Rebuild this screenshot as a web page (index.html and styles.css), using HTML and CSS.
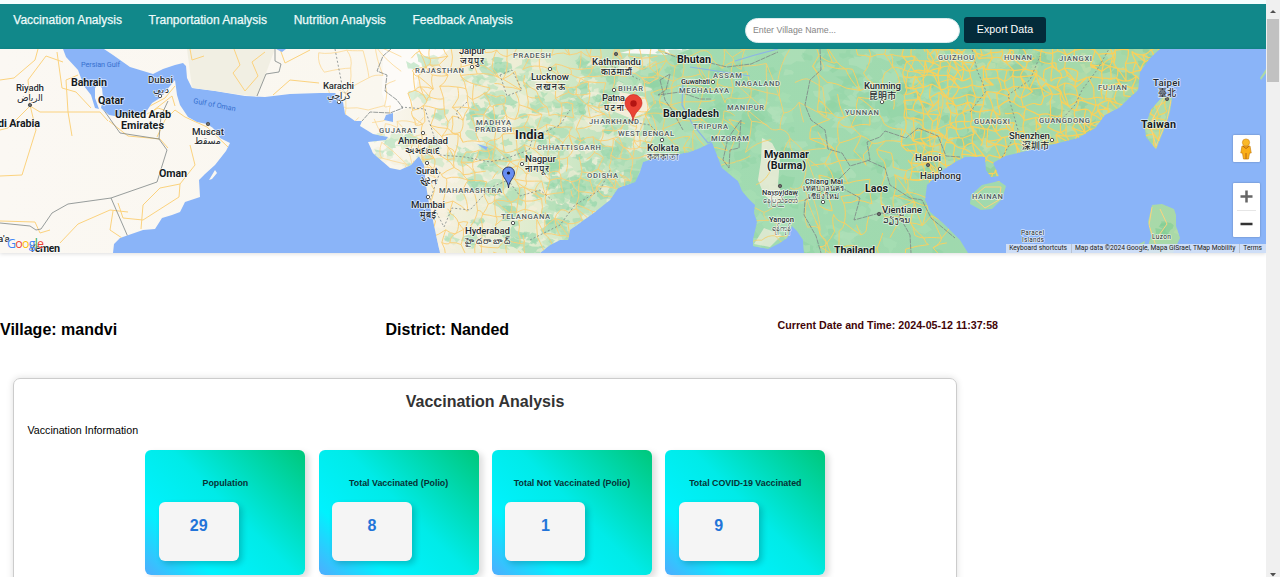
FILE: index.html
```html
<!DOCTYPE html>
<html lang="en">
<head>
<meta charset="utf-8">
<title>Vaccination Analysis</title>
<link rel="stylesheet" href="styles.css">
</head>
<body>
<div class="page">
<header class="topbar">
  <nav class="nav"><a>Vaccination Analysis</a><a>Tranportation Analysis</a><a>Nutrition Analysis</a><a>Feedback Analysis</a></nav>
  <div class="tools"><input class="search" placeholder="Enter Village Name..."><button class="export">Export Data</button></div>
</header>
<section class="map">
<svg class="map-canvas" viewBox="0 49 1266 204" preserveAspectRatio="none">
  <defs>
    <linearGradient id="terrain" gradientUnits="userSpaceOnUse" x1="0" y1="0" x2="1266" y2="0">
      <stop offset="0" stop-color="#fbf8f3"/><stop offset=".3" stop-color="#faf7ef"/><stop offset=".35" stop-color="#f4f0df"/><stop offset=".42" stop-color="#dfecce"/><stop offset=".5" stop-color="#b7e0ba"/><stop offset=".56" stop-color="#a1dbb1"/><stop offset=".75" stop-color="#9fd9ae"/><stop offset="1" stop-color="#add9a6"/>
    </linearGradient>
    <path id="land" d="M0 49H63L66 57L78 70L84 86L91 95L95 108L99 109L95 98L95 88L98 84L102 88L103 98L101 108L109 115L120 117L135 115L146 112L152 103L160 98L170 86L175 80L177 95L180 105L188 117L197 122L207 124L213 128L220 138L230 143L226 151L215 165L205 174L199 180L200 197L185 202L180 212L172 215L162 218L155 229L143 230L120 238L114 244L113 253H0Z
      M104 49L113 55L130 67L153 74L163 69L175 65L183 63L186 66L187 78L192 88L215 91L245 96L265 97L290 94L320 93L335 93L343 102L345 114L355 121L362 121L360 126L373 134L388 137L386 140L368 142L373 153L382 161L390 168L400 170L411 165L419 156L424 165L426 185L428 198L432 215L436 235L440 253H540L550 245L560 240L568 240L570 230L595 212L610 200L618 188L635 182L640 172L643 162L655 158L672 155L690 152L700 148L712 142L718 158L722 168L738 181L742 191L748 198L755 205L754 213L757 222L753 240L753 246L768 249L780 243L787 238L792 226L797 231L803 240L804 253H968L960 240L945 225L930 212L925 200L927 185L940 172L955 162L965 157L985 157L986 170L991 177L999 176L993 163L1005 156L1030 150L1050 145L1078 138L1095 128L1105 115L1120 107L1129 98L1138 90L1140 72L1150 58L1160 49Z
      M1163 96L1172 98L1170 112L1164 130L1156 149L1146 137L1145 126L1151 110Z
      M971 195L982 185L999 181L1006 186L1002 199L992 209L981 210L970 204Z
      M1152 205L1162 204L1174 209L1176 215L1176 226L1180 238L1173 253H1146L1151 236L1148 222Z
      M1260 78L1266 69V73L1261 80Z M209 180L215 170L217 173L212 179Z M1139 244L1145 241L1142 253Z"/>
    <clipPath id="land-clip"><use href="#land"/></clipPath>
  </defs>
  <rect y="49" width="1266" height="204" fill="#8ab4f8"/>
  <use href="#land" fill="url(#terrain)"/>
  <g clip-path="url(#land-clip)">
    <path d="M187 49H275L257 97L192 88Z" fill="#f1efe3"/>
    <path d="M383 49H450L420 70L412 106L390 115L382 94Z" fill="#fdfbf8"/>
    <path d="M635 49H690L675 55L620 53Z" fill="#f8f8f4"/>
    <g id="patches"></g>
    <path d="M762 138L772 143L780 158L778 185L783 196L777 205L764 195L758 180L761 160Z" fill="#f5eedc" opacity=".75"/>
    <path d="M620 92L645 97L650 110L632 119L615 112Z" fill="#f4eeda"/>
    <path d="M764 228L782 235L770 247L754 244Z" fill="#f2eedb" opacity=".7"/>
    <g id="roads" fill="none" stroke-linejoin="round"></g>
    <g fill="none" stroke="#fbd27e" stroke-width="1" stroke-linejoin="round">
      <path d="M0 80L14 78L35 60L38 49M30 106L40 112H100L108 121M30 106L8 128L0 130M30 103L28 80L46 56L63 62M30 105L36 130L22 175L0 176M57 52L62 88L76 92L91 108M68 112L66 80L78 75M68 112L72 136M109 121L128 136L160 139L168 148M157 137L165 120L175 110M190 145L195 165L180 184L160 188L143 205L141 229M180 184L179 197L143 220L123 218L118 203M0 221L35 222L40 233L50 230M60 243L78 224L110 210L128 212M113 211L110 230L122 238M175 110L185 117L207 127L228 147M150 106L165 98L175 86M154 110L163 103L172 96L175 106M147 114L158 108L170 112M234 49L240 65L233 73L245 91L258 76L252 62L265 52M273 95L290 80L319 83M280 49L285 63L310 50M190 49L192 60L204 56"/>
      <path d="M1164 98L1150 124L1156 146L1167 120L1171 100M973 197L985 187L1001 187L999 200L985 208L973 197M1152 207L1149 225L1156 246M1160 209L1167 224L1157 238"/>
    </g>
    <g fill="none" stroke="#7d8585" stroke-width=".8">
      <path d="M103 109L120 133L159 139L167 150L157 182L111 198L68 204L52 213L41 229L36 230L30 226L0 223M111 198L128 237M159 139L161 116L168 101M275 49V61L281 64L279 72L266 74L257 96"/>
      <path d="M391 49L383 56L377 71L387 75L385 91L397 100L403 108L390 113L370 112L362 121M665 53L682 59L706 62L727 67L751 64L778 52M820 49L821 70L810 80L805 105L811 120L825 130L828 149L842 153L850 166L870 160L867 142L880 137L885 131L906 138L918 128L938 136L946 156L960 157M660 80L670 74L666 90L658 95L680 92L700 99L712 99M660 80L665 100L672 110L683 130M741 120L739 148L730 150L729 168L723 160L728 138L741 120M850 168L832 186L805 200L804 215L816 236L821 253M867 160L885 168L890 185L910 198L922 200L931 218L955 238M842 188L860 198L854 220L880 213L898 214L910 235L911 253" stroke-dasharray="5 .8"/>
      <path stroke-dasharray="2 2" d="M335 49L343 90L347 95M401 107L425 109L432 130L440 155L465 157L490 162L510 157L529 150L533 137L560 125L570 110M500 75L512 70L522 90L507 96L500 75M467 102L456 112L459 119M440 172L430 200L444 227L452 208L470 210L490 188L508 180L520 196L540 190L552 200M530 240L560 225L575 205L600 190L610 170M970 112L986 91L977 70L972 49M1000 161L1018 130L1008 95L1030 80L1040 56M1063 118L1075 105L1082 90L1097 70L1109 49M600 60L620 70L640 80M620 120L650 125L665 140"/>
    </g>
    <path d="M683 83L682 105L693 125L708 143L715 140M735 61L755 55L778 49M750 76L690 67" fill="none" stroke="#8db5e6" stroke-width="1.2"/>
    <path d="M386 115L393 113V122L384 120ZM477 144L488 147L486 150ZM276 49H286L282 52Z" fill="#8ab4f8"/>
  </g>
  <g class="dots"><circle cx="30" cy="105" r="1.700"/><circle cx="160" cy="96" r="1.700"/><circle cx="208" cy="124" r="1.700"/><circle cx="339" cy="102" r="1.700"/><circle cx="472" cy="67" r="1.700"/><circle cx="550" cy="69" r="1.700"/><circle cx="616" cy="54" r="1.700"/><circle cx="614" cy="90" r="1.700"/><circle cx="423" cy="133" r="1.700"/><circle cx="427" cy="163" r="1.700"/><circle cx="428" cy="197" r="1.700"/><circle cx="522" cy="164" r="1.700"/><circle cx="513" cy="223" r="1.700"/><circle cx="662" cy="140" r="1.700"/><circle cx="713" cy="82" r="1.700"/><circle cx="780" cy="186" r="1.700"/><circle cx="882" cy="102" r="1.700"/><circle cx="823" cy="202" r="1.700"/><circle cx="879" cy="214" r="1.700"/><circle cx="928" cy="165" r="1.700"/><circle cx="940" cy="169" r="1.700"/><circle cx="1052" cy="140" r="1.700"/><circle cx="1167" cy="99" r="1.700"/></g>
  <g class="capitals"><circle cx="30" cy="105" r=".9"/><circle cx="208" cy="124" r=".9"/><circle cx="616" cy="54" r=".9"/><circle cx="780" cy="186" r=".9"/><circle cx="879" cy="214" r=".9"/><circle cx="928" cy="165" r=".9"/><circle cx="1167" cy="99" r=".9"/></g>
  <g class="country">
    <text x="71" y="86" textLength="36">Bahrain</text><text x="98" y="104" textLength="26">Qatar</text><text x="115" y="118" textLength="56">United Arab</text><text x="121" y="129" textLength="43">Emirates</text><text x="-2" y="126.500" textLength="42">di Arabia</text><text x="159" y="177" textLength="28">Oman</text><text x="29" y="252" textLength="31">Yemen</text>
    <text class="major" x="515" y="139" textLength="29">India</text><text x="677" y="63" textLength="34">Bhutan</text><text x="663" y="117" textLength="56">Bangladesh</text><text x="764" y="158" textLength="45">Myanmar</text><text x="767" y="168.500" textLength="39">(Burma)</text><text x="865" y="192" textLength="23">Laos</text><text x="834" y="254" textLength="41">Thailand</text><text x="1141" y="128" textLength="35">Taiwan</text>
  </g>
  <g class="city">
    <text x="16" y="91" textLength="28">Riyadh</text><text x="17" y="101" textLength="26">الرياض</text><text x="148" y="83" textLength="25">Dubai</text><text x="153" y="93" textLength="16">دبي</text><text x="192" y="135" textLength="32">Muscat</text><text x="194" y="144" textLength="27">مسقط</text><text x="-2" y="242">a'a</text>
    <text x="323" y="89" textLength="31">Karachi</text><text x="327" y="99" textLength="24">كراچي</text><text x="459" y="54" textLength="26">Jaipur</text><text class="native" x="460" y="63.500" textLength="24">जयपुर</text><text x="531" y="80" textLength="38">Lucknow</text><text class="native" x="536" y="89.500" textLength="29">लखनऊ</text><text x="592" y="65" textLength="49">Kathmandu</text><text class="native" x="601" y="74.500" textLength="31">काठमाडौं</text><text x="602" y="101" textLength="23">Patna</text><text class="native" x="604" y="110.500" textLength="20">पटना</text>
    <text x="398" y="144" textLength="50">Ahmedabad</text><text class="native" x="405" y="153.500" textLength="35">અમદાવાદ</text><text x="416" y="174" textLength="22">Surat</text><text class="native" x="419" y="184" textLength="17">સુરત</text><text x="411" y="208" textLength="34">Mumbai</text><text class="native" x="420" y="217.500" textLength="16">मुंबई</text><text x="525" y="162" textLength="31">Nagpur</text><text class="native" x="525" y="171.500" textLength="24">नागपूर</text><text x="465" y="234" textLength="45">Hyderabad</text><text class="native" x="465" y="244" textLength="45">హైదరాబాద్</text>
    <text x="647" y="151" textLength="32">Kolkata</text><text class="native" x="647" y="160" textLength="32">কলকাতা</text><text class="small" x="681" y="84" textLength="29">Guwahati</text><text x="864" y="89" textLength="37">Kunming</text><text class="native" x="869" y="98.500" textLength="27">昆明市</text><text class="small" x="762" y="195" textLength="36">Naypyidaw</text><text class="small" x="763" y="203" textLength="35">နေပြည်တော်</text><text class="small" x="769" y="222" textLength="25">Yangon</text><text class="small" x="772" y="231" textLength="19">ရန်ကုန်</text><text class="small" x="805" y="184" textLength="38">Chiang Mai</text><text class="small" x="803" y="191" textLength="41">เทศบาลนคร</text><text class="small" x="808" y="199" textLength="31">เชียงใหม่</text>
    <text x="882" y="213" textLength="40">Vientiane</text><text class="native" x="883" y="222.500" textLength="27">ວຽງຈັນ</text><text x="915" y="161" textLength="26">Hanoi</text><text x="920" y="179" textLength="41">Haiphong</text><text x="1009" y="139" textLength="41">Shenzhen</text><text class="native" x="1022" y="149" textLength="27">深圳市</text><text x="1153" y="86" textLength="27">Taipei</text><text class="native" x="1158" y="95.500" textLength="18">臺北</text><text class="islet" x="1152" y="239" textLength="19">Luzon</text><text class="islet" x="1021" y="235" textLength="23">Paracel</text><text class="islet" x="1022" y="241.500" textLength="22">Islands</text>
  </g>
  <g class="state">
    <text x="415" y="72.500" textLength="49">RAJASTHAN</text><text x="513" y="57.500" textLength="38">PRADESH</text><text x="618" y="90.500" textLength="25">BIHAR</text><text x="589" y="124" textLength="50">JHARKHAND</text><text x="618" y="135.500" textLength="56">WEST BENGAL</text><text x="379" y="133" textLength="38">GUJARAT</text><text x="476" y="124.500" textLength="35">MADHYA</text><text x="475" y="131.500" textLength="37">PRADESH</text><text x="537" y="149.500" textLength="64">CHHATTISGARH</text><text x="587" y="177.500" textLength="31">ODISHA</text><text x="439" y="192.500" textLength="63">MAHARASHTRA</text><text x="501" y="219" textLength="49">TELANGANA</text><text x="713" y="77.500" textLength="29">ASSAM</text><text x="735" y="86" textLength="45">NAGALAND</text><text x="679" y="92.500" textLength="50">MEGHALAYA</text><text x="727" y="109.500" textLength="37">MANIPUR</text><text x="693" y="128.500" textLength="35">TRIPURA</text><text x="711" y="141" textLength="38">MIZORAM</text><text x="845" y="114.500" textLength="34">YUNNAN</text><text x="938" y="60" textLength="36">GUIZHOU</text><text x="1004" y="60" textLength="28">HUNAN</text><text x="1059" y="61" textLength="33">JIANGXI</text><text x="1098" y="90" textLength="29">FUJIAN</text><text x="974" y="123.500" textLength="36">GUANGXI</text><text x="1039" y="122.500" textLength="51">GUANGDONG</text><text x="972" y="198.500" textLength="31">HAINAN</text>
  </g>
  <g class="water"><text x="81" y="67" textLength="39">Persian Gulf</text><text x="193" y="103" transform="rotate(11 193 103)" textLength="43">Gulf of Oman</text></g>
  <path d="M633 121C632 111 625 110 625 103A8.500 8.500 0 0 1 642 103C642 110 634 111 633 121Z" fill="#ea4335" stroke="#c5221f" stroke-width=".6"/><circle cx="633.500" cy="103.500" r="3.200" fill="#b31412"/>
  <path d="M508.500 188C508 180 502.500 178 502.500 173A6 6 0 0 1 514.500 173C514.500 178 509 180 508.500 188Z" fill="#668df1" stroke="#222d55" stroke-width=".9"/><circle cx="508.500" cy="173" r="1.600" fill="#10152d"/>
  <text class="google" x="7" y="248" textLength="37"><tspan fill="#4285f4">G</tspan><tspan fill="#ea4335">o</tspan><tspan fill="#fbbc04">o</tspan><tspan fill="#4285f4">g</tspan><tspan fill="#34a853">l</tspan><tspan fill="#ea4335">e</tspan></text>
</svg>
<div class="controls">
  <div class="control person"><svg width="16" height="22" viewBox="0 0 16 22"><path d="M4 8H12L13.200 15H11.500L10.500 21H5.500L4.500 15H2.800Z" fill="#fbaf18" stroke="#c98213" stroke-width=".7"/><circle cx="8" cy="4.500" r="3.600" fill="#fbb928" stroke="#c98213" stroke-width=".6"/><path d="M5 8.200L8 10.500L11 8.200M8 15V21" fill="none" stroke="#b86513" stroke-width="1"/></svg></div>
  <div class="control zoom"><svg width="27" height="27" viewBox="0 0 27 27"><path d="M7.500 13.500H19.500M13.500 7.500V19.500" stroke="#666" stroke-width="2.500"/></svg><i></i><svg width="27" height="26" viewBox="0 0 27 26"><path d="M7.500 13H19.500" stroke="#333" stroke-width="2.500"/></svg></div>
</div>
<div class="attribution"><span>Keyboard shortcuts</span><span>Map data ©2024 Google, Mapa GISrael, TMap Mobility</span><span>Terms</span></div>
</section>
<section class="place"><h2>Village: mandvi</h2><h2>District: Nanded</h2><p>Current Date and Time: 2024-05-12 11:37:58</p></section>
<main class="panel">
  <h2>Vaccination Analysis</h2>
  <p>Vaccination Information</p>
  <div class="stats">
    <article class="stat"><h3>Population</h3><div>29</div></article>
    <article class="stat"><h3>Total Vaccinated (Polio)</h3><div>8</div></article>
    <article class="stat"><h3>Total Not Vaccinated (Polio)</h3><div>1</div></article>
    <article class="stat"><h3>Total COVID-19 Vaccinated</h3><div>9</div></article>
  </div>
</main>
</div>
<aside class="scrollbar"><svg width="14" height="15" viewBox="0 0 14 15"><path d="M4 9L7 6L10 9Z" fill="#505050"/></svg><div class="thumb"></div><svg class="down" width="14" height="5" viewBox="0 0 14 5"><path d="M4 1H10L7 4.500Z" fill="#505050"/></svg></aside>
<script src="map.js"></script>
</body>
</html>
```
FILE: styles.css
```css
* { box-sizing: border-box; }
body { margin: 0; height: 577px; overflow: hidden; display: flex; background: #fff; font-family: "Liberation Sans", Arial, sans-serif; }
h2, h3, p { margin: 0; }
.page { width: 1266px; height: 577px; overflow: hidden; border-top: 4px solid #f3fffe; }
.topbar { height: 45px; display: flex; background: #11888a; }
.nav { width: 745px; padding: 9px 0 0 13.300px; display: flex; gap: 26.700px; color: #eefafa; font-size: 12px; line-height: 14px; -webkit-text-stroke: .25px #eefafa; white-space: nowrap; }
.nav a { letter-spacing: .005px; }
.tools { display: flex; gap: 4px; padding-top: 13px; align-items: flex-start; }
.search { width: 215px; height: 25px; margin-top: 1px; padding: 0 7px 2px; border: 1px solid #dcebed; border-radius: 13px; font: 8.800px "Liberation Sans", sans-serif; outline: 0; }
.search::placeholder { color: #858585; }
.export { width: 82px; height: 26px; border: 0; border-radius: 3px; padding: 0 0 2px; background: #032b3a; color: #fff; font: 10.670px "Liberation Sans", sans-serif; }
.map { height: 204px; position: relative; box-shadow: 0 1px 4px #0002; }
.map-canvas { display: block; width: 1266px; height: 204px; font-family: Roboto, "Noto Sans", "Noto Sans CJK SC", "DejaVu Sans", sans-serif; }
.map-canvas text { paint-order: stroke; stroke: #fffa; stroke-width: 1.600px; stroke-linejoin: round; }
.country { font-size: 10.800px; font-weight: 700; fill: #171b1e; }
.country .major { font-size: 12.800px; }
.city { font-size: 9.700px; font-weight: 500; fill: #262b2f; }
.city .native { font-size: 8.900px; }
.city .small { font-size: 7.600px; }
.city .islet { font-size: 6.600px; font-weight: 400; }
.state { font-size: 7.600px; fill: #505b5f; font-weight: 500; }
.map-canvas .water text { fill: #3670cf; font-size: 7.300px; stroke: none; }
.map-canvas .google { font: 500 12.500px "Open Sans", sans-serif; stroke-width: 1px; }
.dots { fill: #fff; stroke: #444; stroke-width: .9; }
.capitals { fill: #222; }
.controls { position: absolute; right: 6.500px; top: 86px; width: 27px; display: grid; gap: 21px; }
.control { background: #fff; border-radius: 1px; box-shadow: 0 0 2px #0005; }
.person { height: 27px; display: grid; place-items: center; }
.zoom { height: 54px; display: flex; flex-direction: column; align-items: center; }
.zoom i { width: 19px; height: 1px; background: #e6e6e6; }
.attribution { position: absolute; right: 0; bottom: 0; height: 9px; display: flex; background: #d9e5f7dd; color: #222; font: 6.670px/9px Roboto, sans-serif; white-space: nowrap; }
.attribution span { padding: 0 4px 0 3px; }
.attribution span + span { border-left: 1px solid #b9c3d0; }
.place { height: 125px; padding-top: 66px; display: grid; grid-template-columns: 385.500px 392px 1fr; }
.place h2 { padding-top: 2px; font-size: 16px; line-height: 18px; }
.place p { color: #420508; font-size: 10.670px; line-height: 12px; font-weight: 700; letter-spacing: .01px; }
.panel { width: 944px; height: 260px; margin-left: 13px; padding: 14px 13.500px; border: 1px solid #ccc; border-radius: 7px; box-shadow: 0 0 7px #0002; }
.panel > h2 { text-align: center; color: #333; font-size: 16px; line-height: 18px; }
.panel > p { margin-top: 13px; font-size: 10.670px; line-height: 13px; }
.stats { margin-top: 13px; padding-left: .7px; display: flex; justify-content: center; gap: 13.330px; }
.stat { width: 160px; height: 124.500px; padding: 27px 13.330px 0; border-radius: 6px; background: linear-gradient(45deg, #4facfe 0%, #00f2fe 24%, #00ebe8 53%, #00c97f 98%); box-shadow: 4px 3px 6px #0002; }
.stat h3 { height: 25.300px; text-align: center; font-size: 8.850px; line-height: 12px; white-space: nowrap; color: #073235; }
.stat div { width: 80px; height: 58.700px; padding-top: 14.500px; border-radius: 6px; background: #f5f5f5; color: #2274d9; text-align: center; font-size: 16px; line-height: 18px; font-weight: 700; box-shadow: 3px 3px 6px #0003; }
.scrollbar { width: 14px; height: 577px; padding-top: 4px; background: #f0f0f0; display: flex; flex-direction: column; }
.scrollbar svg { display: block; }
.thumb { width: 12px; height: 63px; margin-left: 1px; background: #c1c1c1; }
.down { margin-top: auto; }
```
FILE: map.js
```js
// Terrain patches and the road mesh, generated from a fixed seed.
let seed = 8731;
const rnd = () => { seed = (seed * 1664525 + 1013904223) >>> 0; return seed / 4294967296; };
const ns = "http://www.w3.org/2000/svg";
const add = (parent, attrs) => {
  const p = document.createElementNS(ns, "path");
  for (const k in attrs) p.setAttribute(k, attrs[k]);
  document.getElementById(parent).append(p);
};
const blob = (x, y, r) => {
  const pts = [];
  for (let i = 0; i < 11; i++) {
    const a = i / 11 * Math.PI * 2, q = r * (.35 + rnd() * .85);
    pts.push((x + Math.cos(a) * q * 1.2).toFixed(1) + " " + (y + Math.sin(a) * q * .9).toFixed(1));
  }
  return "M" + pts.join("L") + "Z";
};
const patches = (x0, x1, y0, y1, n, r, colors) => {
  for (let i = 0; i < n; i++) add("patches", {
    d: blob(x0 + rnd() * (x1 - x0), y0 + rnd() * (y1 - y0), r * (.4 + rnd())),
    fill: colors[Math.floor(rnd() * colors.length)], opacity: .6
  });
};
patches(410, 500, 60, 253, 110, 7, ["#f6f0de", "#c4e6c3", "#f8f4e8", "#aee0b8"]);
patches(372, 425, 135, 170, 25, 6, ["#a9ddb6", "#cce8c5", "#f4f0df"]);
patches(470, 650, 60, 253, 330, 7, ["#93d6aa", "#f5eed8", "#b5e1b9", "#f3f0dc", "#a3dbb0"]);
patches(545, 650, 150, 253, 70, 7, ["#93d6aa", "#b5e1b9", "#a3dbb0"]);
patches(650, 940, 49, 253, 260, 9, ["#91d3a5", "#b2e1ba", "#94d5a8", "#a8dfb4"]);
patches(900, 1165, 49, 175, 220, 7, ["#8ccc9d", "#b4dcaa", "#a0d5a2", "#c3dfac"]);
patches(1145, 1180, 95, 253, 20, 6, ["#81cd95", "#b9dfaa"]);

const mesh = (x0, x1, y0, y1, step, keep, color, width) => {
  const cols = Math.ceil((x1 - x0) / step), rows = Math.ceil((y1 - y0) / step), g = [];
  for (let j = 0; j <= rows; j++) {
    g.push([]);
    for (let i = 0; i <= cols; i++) g[j].push([x0 + (i + (rnd() - .5) * .9) * step, y0 + (j + (rnd() - .5) * .9) * step]);
  }
  let d = "";
  const link = (a, b) => {
    if (!b || rnd() > keep) return;
    const mx = (a[0] + b[0]) / 2 + (rnd() - .5) * step * .5, my = (a[1] + b[1]) / 2 + (rnd() - .5) * step * .5;
    d += `M${a[0].toFixed(1)} ${a[1].toFixed(1)}Q${mx.toFixed(1)} ${my.toFixed(1)} ${b[0].toFixed(1)} ${b[1].toFixed(1)}`;
  };
  for (let j = 0; j <= rows; j++) for (let i = 0; i <= cols; i++) {
    link(g[j][i], g[j][i + 1]);
    link(g[j][i], g[j + 1] && g[j + 1][i]);
    if (rnd() > .7) link(g[j][i], g[j + 1] && g[j + 1][i + 1]);
  }
  add("roads", { d, stroke: color, "stroke-width": width });
};
mesh(412, 650, 44, 253, 10.5, .68, "#fbcf76", .95);
mesh(370, 425, 118, 170, 15, .5, "#fbd894", .8);
mesh(325, 380, 52, 120, 18, .55, "#fbd894", .8);
mesh(650, 745, 52, 150, 12, .6, "#f4d06a", .9);
mesh(745, 820, 52, 250, 19, .55, "#f2d070", .9);
mesh(815, 940, 44, 253, 13.5, .62, "#f6d063", 1);
mesh(905, 1165, 44, 178, 8.500, .78, "#fad05a", 1.2);
```
